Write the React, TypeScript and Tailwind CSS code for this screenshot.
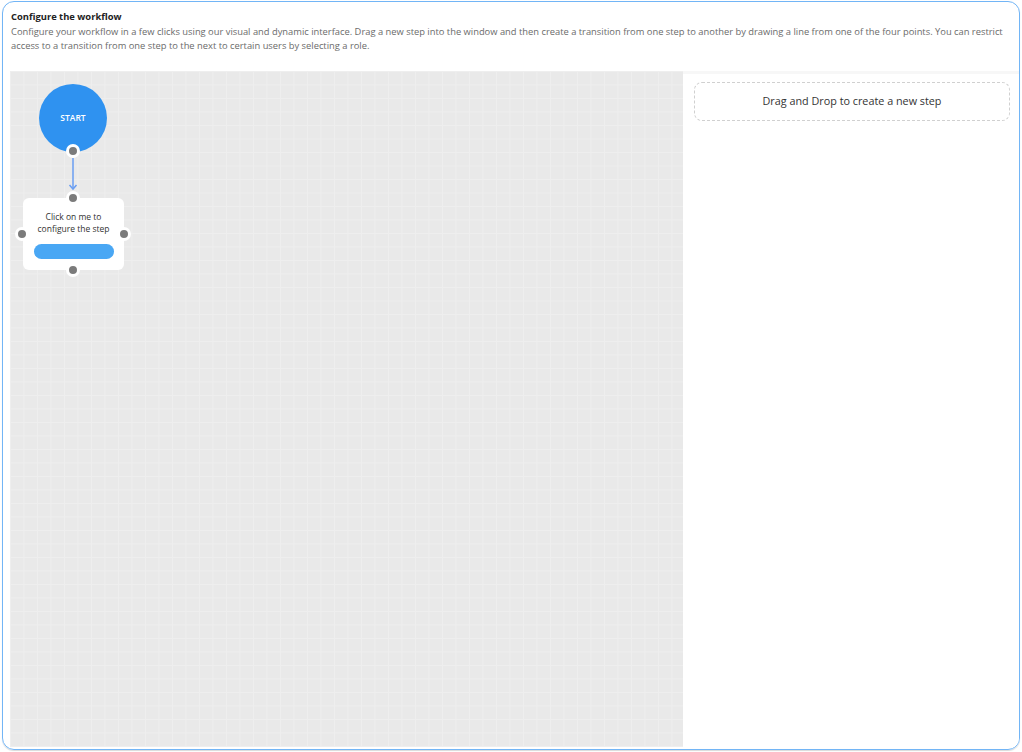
import React from "react";

const Handle = ({ className }: { className: string }) => (
  <span
    className={`absolute h-[14px] w-[14px] -translate-x-1/2 -translate-y-1/2 rounded-full border-[3px] border-white bg-[#7b7b7b] ${className}`}
  />
);

export default function App() {
  return (
    <div className="h-[752px] w-[1022px] bg-white pl-[2px] pt-[1px] font-['Open_Sans',sans-serif]">
      <div className="flex h-[749px] w-[1018px] flex-col overflow-hidden rounded-[12px] border border-[#72b5f6] shadow-[0_1px_1px_rgba(0,0,0,0.15)]">
        <div className="h-[69px] pl-[8px] pr-[4px] pt-[8px]">
          <h1 className="text-[9.4px] font-bold leading-[13px] text-[#222]">Configure the workflow</h1>
          <p className="mt-[2px] text-[9.35px] leading-[14px] text-[#6b6b6b]">
            Configure your workflow in a few clicks using our visual and dynamic interface. Drag a new step into the window and then create a transition from one step to another by drawing a line from one of the four points. You can restrict access to a transition from one step to the next to certain users by selecting a role.
          </p>
        </div>

        <div className="flex flex-1 pb-[2px] pl-[7px]">
          {/* canvas */}
          <div className="relative w-[673px] bg-[#e9e9e9] bg-[linear-gradient(to_right,#eeeeee_1px,transparent_1px),linear-gradient(to_bottom,#eeeeee_1px,transparent_1px)] bg-[size:13.5px_13.5px]">
            <div className="absolute left-[29px] top-[13px] flex h-[68px] w-[68px] items-center justify-center rounded-full bg-[#2f92f0]">
              <span className="text-[8.5px] font-semibold text-white">START</span>
            </div>
            <Handle className="left-[63px] top-[80px]" />

            <svg className="absolute left-[57px] top-[87px]" width="12" height="36" viewBox="0 0 12 36">
              <line x1="6" y1="0" x2="6" y2="31" stroke="#6a9ef2" strokeWidth="1.5" />
              <path d="M2.5 27 L6 31 L9.5 27" fill="none" stroke="#6a9ef2" strokeWidth="1.5" />
            </svg>

            <div className="absolute left-[13px] top-[127px] flex h-[72px] w-[101px] flex-col items-center rounded-[6px] bg-white pt-[13px]">
              <p className="text-center text-[8.5px] leading-[12px] text-[#333]">
                Click on me to
                <br />
                configure the step
              </p>
              <div className="mt-[9px] h-[15px] w-[80px] rounded-full bg-[#49a7f4]" />
            </div>
            <Handle className="left-[63px] top-[127px]" />
            <Handle className="left-[12px] top-[163px]" />
            <Handle className="left-[114px] top-[163px]" />
            <Handle className="left-[63px] top-[199px]" />
          </div>

          {/* right panel */}
          <div className="flex-1 border-t-[3px] border-[#f7f7f7] bg-white pl-[11px] pr-[9px] pt-[8px]">
            <div className="flex h-[39px] items-center justify-center rounded-[8px] border border-dashed border-[#d0d0d0]">
              <span className="text-[10.8px] text-[#333]">Drag and Drop to create a new step</span>
            </div>
          </div>
        </div>
      </div>
    </div>
  );
}
